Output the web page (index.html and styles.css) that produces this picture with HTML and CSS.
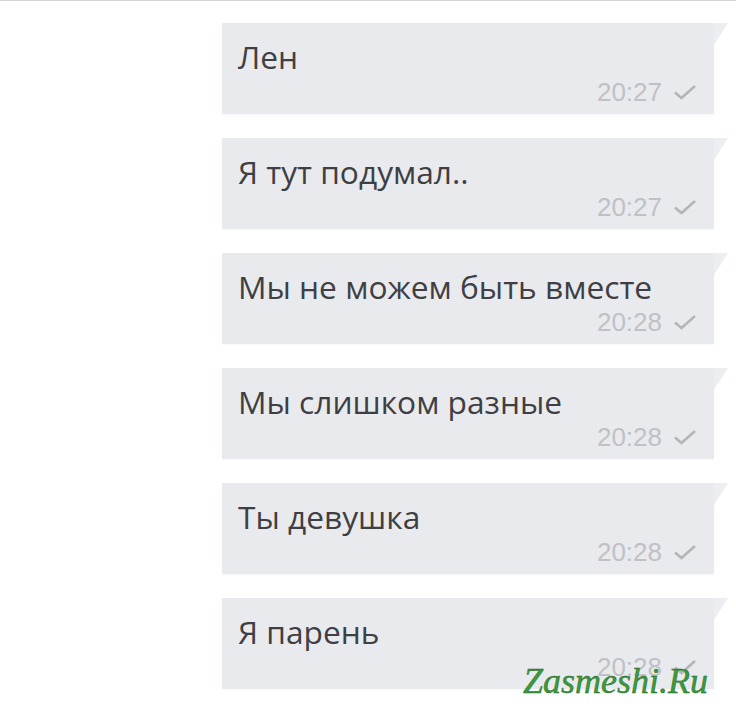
FILE: index.html
```html
<!DOCTYPE html>
<html lang="ru">
<head>
<meta charset="utf-8">
<link rel="stylesheet" href="styles.css">
</head>
<body>
<div class="page">
  <div class="topline"></div>
  <div class="chat">
    <div class="msg"><div class="text">Лен</div><div class="meta"><span class="time">20:27</span><svg class="check" viewBox="0 0 24 16"><path d="M2 8.5 L8.5 14 L22 2" /></svg></div></div>
    <div class="msg"><div class="text">Я тут подумал..</div><div class="meta"><span class="time">20:27</span><svg class="check" viewBox="0 0 24 16"><path d="M2 8.5 L8.5 14 L22 2" /></svg></div></div>
    <div class="msg"><div class="text">Мы не можем быть вместе</div><div class="meta"><span class="time">20:28</span><svg class="check" viewBox="0 0 24 16"><path d="M2 8.5 L8.5 14 L22 2" /></svg></div></div>
    <div class="msg"><div class="text">Мы слишком разные</div><div class="meta"><span class="time">20:28</span><svg class="check" viewBox="0 0 24 16"><path d="M2 8.5 L8.5 14 L22 2" /></svg></div></div>
    <div class="msg"><div class="text">Ты девушка</div><div class="meta"><span class="time">20:28</span><svg class="check" viewBox="0 0 24 16"><path d="M2 8.5 L8.5 14 L22 2" /></svg></div></div>
    <div class="msg"><div class="text">Я парень</div><div class="meta"><span class="time">20:28</span><svg class="check" viewBox="0 0 24 16"><path d="M2 8.5 L8.5 14 L22 2" /></svg></div></div>
  </div>
  <div class="watermark">Zasmeshi.Ru</div>
</div>
</body>
</html>
```
FILE: styles.css
```css
html, body {
  margin: 0;
  padding: 0;
  background: #ffffff;
}
.page {
  position: relative;
  width: 736px;
  height: 728px;
  overflow: hidden;
  font-family: "Open Sans", "Noto Sans", sans-serif;
}
.topline {
  height: 1px;
  background: #d4d4d4;
}
.chat {
  display: flex;
  flex-direction: column;
  gap: 24px;
  padding: 22px 0 0 222px;
}
.msg {
  position: relative;
  width: 492px;
  height: 91px;
  background: #e9eaee;
  box-sizing: border-box;
  padding: 15px 17px 0 16px;
  display: flex;
  flex-direction: column;
  box-shadow: 0 1px 2px rgba(0, 0, 0, 0.04);
}
.msg::after {
  content: "";
  position: absolute;
  top: 0;
  right: -14px;
  width: 0;
  height: 0;
  border-top: 22px solid #eceef1;
  border-right: 14px solid transparent;
}
.text {
  font-size: 31.7px;
  line-height: 38px;
  color: #3f3f43;
}
.meta {
  display: flex;
  justify-content: flex-end;
  align-items: center;
  gap: 11px;
  margin-top: 2px;
}
.time {
  font-family: "Liberation Sans", Arial, sans-serif;
  font-size: 26px;
  line-height: 28px;
  color: #bfc1c6;
  letter-spacing: 0;
}
.check {
  width: 24px;
  height: 16px;
  fill: none;
  stroke: #b3b5ba;
  stroke-width: 2.6;
}
.watermark {
  position: absolute;
  left: 523px;
  top: 663px;
  font-family: "Liberation Serif", serif;
  font-style: italic;
  font-size: 36px;
  line-height: 36px;
  color: #3a9a3a;
  -webkit-text-stroke: 0.4px #1f5d1f;
}
```
